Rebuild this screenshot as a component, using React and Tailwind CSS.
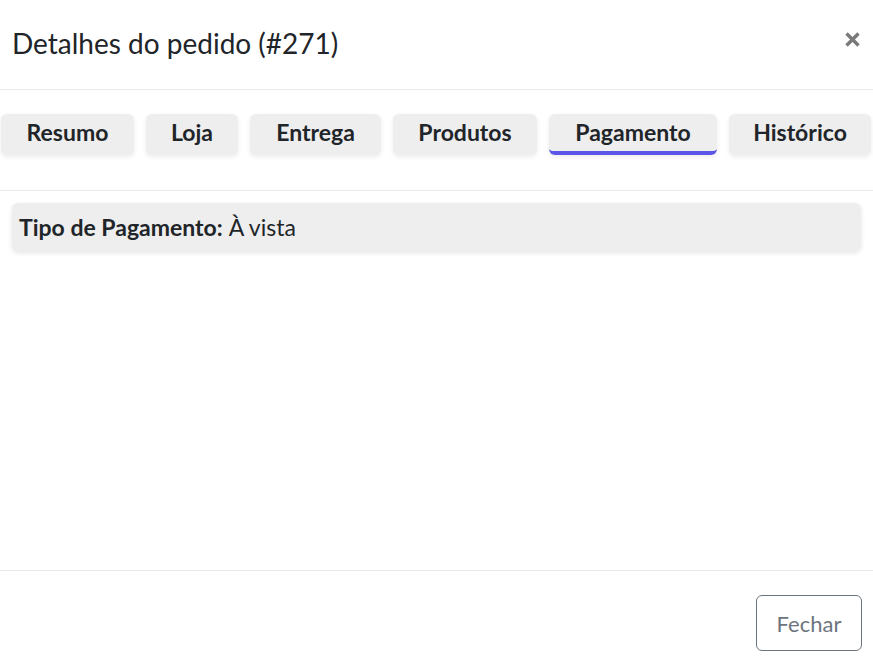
const tabs = [
  { label: "Resumo", w: "w-[133px]" },
  { label: "Loja", w: "w-[92px]" },
  { label: "Entrega", w: "w-[131px]" },
  { label: "Produtos", w: "w-[144px]" },
  { label: "Pagamento", w: "w-[168px]", active: true },
  { label: "Histórico", w: "w-[142px]" },
];

export default function App() {
  return (
    <div
      className="h-[669px] w-[873px] bg-white flex flex-col text-[#212529] overflow-hidden"
      style={{ fontFamily: '"Lato", "Noto Sans", sans-serif' }}
    >
      {/* cabeçalho */}
      <div className="h-[90px] shrink-0 flex items-center justify-between pl-3 pr-[13px] border-b border-[#e9ecef]">
        <h5 className="text-[28px] font-normal leading-none -mt-1">Detalhes do pedido (#271)</h5>
        <button className="text-[#7a7a7a] -mt-[11px]">
          <svg width="15" height="15" viewBox="0 0 15 15">
            <path d="M1.5 1.5 L13.5 13.5 M13.5 1.5 L1.5 13.5" stroke="currentColor" strokeWidth="3.4" />
          </svg>
        </button>
      </div>

      {/* abas */}
      <div className="shrink-0 flex gap-3 pl-px pt-6 pb-[35px] border-b border-[#e9ecef]">
        {tabs.map((t) => (
          <div
            key={t.label}
            className={
              "h-[41px] flex items-center justify-center rounded-md bg-[#eeeeee] shadow-[0_2px_5px_rgba(0,0,0,0.08)] text-[23px] font-bold " +
              t.w +
              (t.active ? " border-b-4 border-[#5b55e8] pb-px" : " pb-[5px]")
            }
          >
            {t.label}
          </div>
        ))}
      </div>

      {/* corpo */}
      <div className="flex-1 px-3 pt-3">
        <div className="h-12 flex items-center px-[7px] rounded-md bg-[#eeeeee] shadow-[0_2px_5px_rgba(0,0,0,0.1)] text-[23px]">
          <span className="font-bold">Tipo de Pagamento:</span>
          <span className="ml-1.5">À vista</span>
        </div>
      </div>

      {/* rodapé */}
      <div className="h-[99px] shrink-0 flex items-start justify-end pt-6 pr-[11px] border-t border-[#e9ecef]">
        <button className="w-[106px] h-[56px] rounded-md border border-[#6c757d] text-[#6c757d] text-[22px]">
          Fechar
        </button>
      </div>
    </div>
  );
}
